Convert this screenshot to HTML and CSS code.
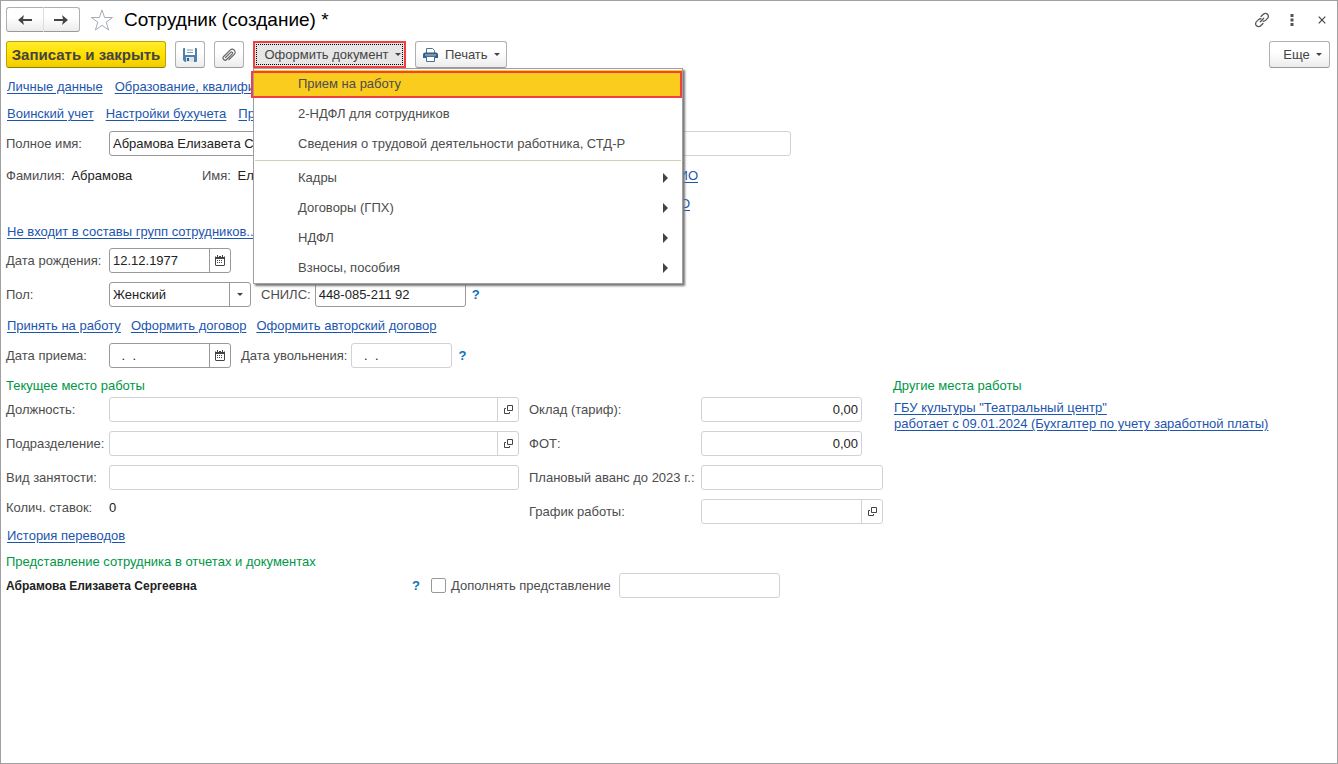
FILE: index.html
```html
<!DOCTYPE html>
<html lang="ru">
<head>
<meta charset="utf-8">
<title>Сотрудник (создание) *</title>
<link rel="stylesheet" href="styles.css">
</head>
<body>
<svg class="sprite" aria-hidden="true">
  <symbol id="calendar" viewBox="0 0 10 11">
    <path fill="#444" fill-rule="evenodd" d="M1 1h8l1 1v8l-1 1H1l-1-1V2zM1 4v6h8V4z"/>
    <path fill="#444" d="M2 0h1v2H2zM7 0h1v2H7zM2 5h1v1H2zM4 5h1v1H4zM6 5h1v1H6zM2 7h1v1H2zM4 7h1v1H4zM6 7h1v1H6z"/>
    <path fill="#fff" d="M1 1h1v1H1zM3 1h1v1H3zM6 1h1v1H6zM8 1h1v1H8z"/>
  </symbol>
  <symbol id="open" viewBox="0 0 9 9">
    <path fill="none" stroke="#444" d="M3.500 .5h5v5h-5zM2 3.500H.5v5h5V7"/>
  </symbol>
</svg>
<div class="window">
  <header class="titlebar">
    <div class="nav-buttons">
      <button class="btn nav-back" aria-label="Назад"><svg width="14" height="10" viewBox="0 0 14 10"><path d="M0 5l6-5-1 4h9v2H5l1 4z" fill="#444"/></svg></button>
      <button class="btn nav-forward" aria-label="Вперед"><svg width="14" height="10" viewBox="0 0 14 10"><path d="M14 5L8 0l1 4H0v2h9l-1 4z" fill="#444"/></svg></button>
    </div>
    <button class="plain star" aria-label="В избранное"><svg width="24" height="22" viewBox="0 0 24 22"><path d="M12 1l2.600 7.500H22.500l-6.300 4.700 2.400 7.800L12 16.300 5.400 21l2.400-7.800L1.500 8.500h7.900z" fill="#fff" stroke="#a3abb8"/></svg></button>
    <h1 class="title">Сотрудник (создание) *</h1>
    <div class="window-tools">
      <button class="plain" aria-label="Ссылка"><svg width="16" height="16" viewBox="0 0 16 16"><g fill="none" stroke="#555" stroke-width="1.300" stroke-linecap="round"><path d="M7 4.500l2.300-2.300a2.900 2.900 0 0 1 4.200 0 2.900 2.900 0 0 1 0 4.200l-2 2a2.900 2.900 0 0 1-2.500.8"/><path d="M9 11.500l-2.300 2.300a2.900 2.900 0 0 1-4.200 0 2.900 2.900 0 0 1 0-4.200l2-2A2.900 2.900 0 0 1 7 6.800"/><path d="M6.300 9.700l3.400-3.400"/></g></svg></button>
      <button class="plain" aria-label="Меню окна"><svg width="4" height="12" viewBox="0 0 4 12"><path fill="#555" d="M.5 0h3v3h-3zM.5 4.500h3v3h-3zM.5 9h3v3h-3z"/></svg></button>
      <button class="plain close" aria-label="Закрыть"><svg width="8" height="8" viewBox="0 0 8 8"><path d="M.7.7l6.600 6.600M7.300.7L.7 7.300" stroke="#444" stroke-width="1.200"/></svg></button>
    </div>
  </header>

  <div class="toolbar">
    <button class="btn primary">Записать и закрыть</button>
    <button class="btn icon-btn" aria-label="Записать"><svg width="14" height="14" viewBox="0 0 14 14"><path d="M0 1q0-1 1-1h12q1 0 1 1v12q0 1-1 1H2l-2-2z" fill="#4f7fab"/><path d="M2 0h10v7H2z" fill="#fff"/><path d="M4 2h6M4 4.500h6" stroke="#7c9ab8"/><path d="M3 9h8v5H3z" fill="#dbe4ec"/><path d="M4 10h2v3H4z" fill="#355f88"/></svg></button>
    <button class="btn icon-btn" aria-label="Присоединенные файлы"><svg width="14" height="14" viewBox="0 0 14 14"><path d="M3.500 9.500l5.200-5.200a1 1 0 0 1 1.600 1.600l-5.600 5.600a2 2 0 0 1-3-3l6.400-6.400a2.900 2.900 0 0 1 4.200 4.200L7 11.500" fill="none" stroke="#666" stroke-width="1.200" stroke-linecap="round"/></svg></button>
    <div class="dropdown">
      <button class="btn menu-btn opened" aria-haspopup="menu" aria-expanded="true">Оформить документ<span class="caret"></span></button>
      <div class="menu" role="menu">
        <button class="menu-item selected" role="menuitem">Прием на работу</button>
        <button class="menu-item" role="menuitem">2-НДФЛ для сотрудников</button>
        <button class="menu-item" role="menuitem">Сведения о трудовой деятельности работника, СТД-Р</button>
        <hr class="menu-line">
        <button class="menu-item sub" role="menuitem">Кадры</button>
        <button class="menu-item sub" role="menuitem">Договоры (ГПХ)</button>
        <button class="menu-item sub" role="menuitem">НДФЛ</button>
        <button class="menu-item sub" role="menuitem">Взносы, пособия</button>
      </div>
    </div>
    <button class="btn menu-btn"><svg class="printer" width="15" height="14" viewBox="0 0 15 14"><path d="M3.500 5V.5h6l2 2V5" fill="#fff" stroke="#4a7196"/><path d="M2 4.500h11q2 0 2 2V10H0V6.500q0-2 2-2z" fill="#355f88"/><path d="M2 7h11" stroke="#b9cbdc"/><path d="M3.500 8.500h8v5h-8z" fill="#fff" stroke="#4a7196"/></svg>Печать<span class="caret"></span></button>
    <button class="btn menu-btn more">Еще<span class="caret"></span></button>
  </div>

  <nav class="links">
    <div class="link-row"><a href="#">Личные данные</a><a href="#">Образование, квалификация</a></div>
    <div class="link-row"><a href="#">Воинский учет</a><a href="#">Настройки бухучета</a><a href="#">Прочее</a></div>
  </nav>

  <form class="form">
    <div class="row">
      <label class="label" for="fullname">Полное имя:</label>
      <input class="box active name" id="fullname" value="Абрамова Елизавета Сергеевна">
      <input class="box name-extra" aria-label="Дополнение к имени" readonly>
    </div>
    <div class="text-rows person-rows">
      <div class="line names">
        <span>Фамилия: <b class="value">Абрамова</b></span>
        <span>Имя: <b class="value">Елизавета</b></span>
        <a href="#">История ФИО</a>
      </div>
      <div class="line declension"><a href="#">Склонение ФИО</a></div>
      <div class="line"><a href="#">Не входит в составы групп сотрудников...</a></div>
    </div>
    <div class="row">
      <label class="label" for="birth">Дата рождения:</label>
      <div class="box active date"><input id="birth" value="12.12.1977"><button type="button" class="side" aria-label="Выбрать дату"><svg width="10" height="11"><use href="#calendar"/></svg></button></div>
    </div>
    <div class="row next">
      <label class="label" for="sex">Пол:</label>
      <div class="box active sex"><select id="sex"><option>Женский</option><option>Мужской</option></select><span class="side"><span class="caret"></span></span></div>
      <label class="after" for="snils">СНИЛС:</label>
      <input class="box active snils" id="snils" value="448-085-211 92">
      <button type="button" class="plain help" aria-label="Справка">?</button>
    </div>
    <div class="text-rows">
      <div class="line link-row actions"><a href="#">Принять на работу</a><a href="#">Оформить договор</a><a href="#">Оформить авторский договор</a></div>
    </div>
    <div class="row">
      <label class="label" for="hired">Дата приема:</label>
      <div class="box active date blank"><input id="hired" value=" .  ."><button type="button" class="side" aria-label="Выбрать дату"><svg width="10" height="11"><use href="#calendar"/></svg></button></div>
      <label class="after" for="fired">Дата увольнения:</label>
      <div class="box fired blank"><input id="fired" value=" .  ." readonly></div>
      <button type="button" class="plain help" aria-label="Справка">?</button>
    </div>

    <div class="columns">
      <section>
        <h2>Текущее место работы</h2>
        <div class="stack">
          <div class="row"><label class="label" for="post">Должность:</label><div class="box grow"><input id="post"><button type="button" class="side" aria-label="Открыть"><svg width="9" height="9"><use href="#open"/></svg></button></div></div>
          <div class="row"><label class="label" for="dept">Подразделение:</label><div class="box grow"><input id="dept"><button type="button" class="side" aria-label="Открыть"><svg width="9" height="9"><use href="#open"/></svg></button></div></div>
          <div class="row"><label class="label" for="kind">Вид занятости:</label><input class="box grow" id="kind"></div>
        </div>
        <div class="line rates"><span class="label">Колич. ставок:</span><b class="value">0</b></div>
        <div class="line"><a href="#">История переводов</a></div>
      </section>
      <section>
        <div class="stack right">
          <div class="row"><label class="label" for="salary">Оклад (тариф):</label><input class="box sum" id="salary" value="0,00"></div>
          <div class="row"><label class="label" for="fot">ФОТ:</label><input class="box sum" id="fot" value="0,00"></div>
          <div class="row"><label class="label" for="advance">Плановый аванс до 2023 г.:</label><input class="box grow" id="advance"></div>
          <div class="row"><label class="label" for="schedule">График работы:</label><div class="box grow"><input id="schedule"><button type="button" class="side" aria-label="Открыть"><svg width="9" height="9"><use href="#open"/></svg></button></div></div>
        </div>
      </section>
      <section>
        <h2>Другие места работы</h2>
        <a class="other" href="#">ГБУ культуры "Театральный центр"<br>работает с 09.01.2024 (Бухгалтер по учету заработной платы)</a>
      </section>
    </div>

    <h2 class="view-title">Представление сотрудника в отчетах и документах</h2>
    <div class="row view">
      <strong class="person">Абрамова Елизавета Сергеевна</strong>
      <button type="button" class="plain help" aria-label="Справка">?</button>
      <label class="check"><input type="checkbox">Дополнять представление</label>
      <input class="box extra" aria-label="Дополнение представления">
    </div>
  </form>
</div>
</body>
</html>
```
FILE: styles.css
```css
* { box-sizing: border-box; }

body {
  margin: 0;
  background: #fff;
  color: #4d4d4d;
  font: 13px/16px "Liberation Sans", Arial, sans-serif;
}

button, input, select { font: inherit; color: inherit; }
button { padding: 0; cursor: pointer; }
svg { display: block; }
.sprite { position: absolute; width: 0; height: 0; }
a { color: #1c55ae; text-underline-offset: 2px; }

.window {
  min-height: 100vh;
  padding: 6px 7px 6px 5px;
  border: 1px solid #a0a0a0;
}

/* Title bar */
.titlebar { display: flex; align-items: center; height: 25px; }
.nav-buttons { display: flex; width: 74px; height: 25px; }
.btn {
  display: flex;
  align-items: center;
  justify-content: center;
  height: 27px;
  border: 1px solid #b0b0b0;
  border-bottom-color: #999;
  border-radius: 3px;
  background: linear-gradient(#fff 40%, #ececec);
  color: #444;
  white-space: nowrap;
}
.nav-back, .nav-forward { flex: 1; height: 25px; }
.nav-back { border-right-color: #ddd; border-radius: 3px 0 0 3px; }
.nav-forward { border-left: 0; border-radius: 0 3px 3px 0; }
.plain { border: 0; background: none; }
.star { margin-left: 10px; }
.title { margin: 0 0 0 10px; color: #000; font-size: 19px; font-weight: 400; line-height: 24px; }
.window-tools { display: flex; align-items: center; gap: 20px; margin-left: auto; padding-right: 4px; }
.close { margin-left: 4px; }

/* Command bar */
.toolbar { display: flex; gap: 9px; margin-top: 9px; }
.primary {
  width: 160px;
  border-color: #bfa300;
  border-bottom-color: #937d00;
  background: linear-gradient(#ffec2e, #ffe000 50%, #f2cc00);
  font-size: 15px;
  font-weight: 700;
}
.icon-btn { width: 30px; }
.menu-btn { padding: 0 6px 0 7px; font-size: 13px; }
.caret {
  margin-left: 6px;
  border: 3px solid transparent;
  border-top-color: #444;
  border-bottom: 0;
}
.printer { margin-right: 7px; }
.more { width: 61px; margin-left: auto; padding-left: 12px; }
.dropdown { position: relative; }
.opened {
  width: 153px;
  padding: 0 4px 0 10px;
  border: 2px solid #f04040;
  border-radius: 0;
  outline: 1px dotted #000;
  outline-offset: -4px;
  background: #e6e6e6;
}
.menu {
  position: absolute;
  z-index: 2;
  top: 27px;
  left: 0;
  width: 430px;
  border: 1px solid #a0a0a0;
  background: #fff;
  box-shadow: 2px 2px 2px #777;
}
.menu-item {
  position: relative;
  display: block;
  width: 100%;
  height: 30px;
  padding-left: 44px;
  border: 0;
  background: none;
  color: #4d4d4d;
  text-align: left;
}
.selected { border: 1px solid #fff; border-width: 1px 0; background: #facc1e; }
.selected::after {
  content: "";
  position: absolute;
  inset: 1px 0 0 -3px;
  border: 2px solid #f04040;
}
.sub::after {
  content: "";
  position: absolute;
  top: 10px;
  right: 14px;
  border: 5px solid transparent;
  border-left-color: #444;
  border-right: 0;
}
.menu-line { height: 1px; margin: 1px 1px 2px; border: 0; background: #cfcfb4; }

/* Section links */
.links { margin-top: 5px; }
.links .link-row { height: 27px; line-height: 27px; }
.link-row { display: flex; gap: 12px; }
.link-row, .line { padding-left: 1px; }
.actions { gap: 10px; }

/* Form */
.form { padding-top: 4px; }
.row { display: flex; align-items: center; height: 25px; }
.next { margin-top: 9px; }
.label { flex: none; width: 103px; }
.line { height: 28px; line-height: 28px; }
.text-rows { padding: 5px 0 3px; }
.person-rows { padding: 6px 0 2px; }
.names { display: flex; width: 692px; padding-left: 0; }
.names span:first-child { width: 196px; }
.names a { margin-left: auto; }
.declension { width: 684px; text-align: right; }
.value { margin-left: 3px; color: #222; font-weight: 400; }
.rates { display: flex; margin-top: 4px; padding-left: 0; }
.rates .value { margin-left: 0; }

.box {
  display: flex;
  min-width: 0;
  height: 25px;
  padding: 0;
  border: 1px solid #d2d2d2;
  border-radius: 3px;
  background: #fff;
  color: #222;
}
input.box, .box input, .box select { padding: 0 3px; outline: 0; }
.box input, .box select { flex: 1; min-width: 0; width: 0; border: 0; background: none; }
.box select { appearance: none; }
.active { border-color: #999; }
.side {
  display: flex;
  flex: none;
  align-items: center;
  justify-content: center;
  width: 21px;
  border: 0;
  border-left: 1px solid #d2d2d2;
  background: none;
}
.active .side { border-color: #999; }
.side .caret { margin: 0; }
.grow { flex: 1; }
.name { flex: 0 1 410px; }
.name-extra { flex: 0 1 262px; margin-left: 10px; }
.date { width: 122px; }
.sex { width: 142px; }
.snils { width: 151px; }
.fired { width: 101px; }
.blank input { padding-left: 8px; white-space: pre; }
.after { margin: 0 4px 0 10px; }
.help { margin-left: 6px; color: #0d72b9; font-weight: 700; }

h2 { margin: 0 0 3px; color: #009646; font-size: 13px; font-weight: 400; line-height: 16px; }
.columns {
  display: grid;
  grid-template-columns: 513px 354px minmax(0, 1fr);
  gap: 10px;
  margin-top: 10px;
}
.stack { display: grid; grid-template-columns: minmax(0, 1fr); gap: 9px; }
.right { padding-top: 19px; }
.right .label { width: 172px; }
.sum { width: 161px; text-align: right; }
.other { display: block; margin: 6px 0 0 1px; }
.view-title { margin-top: 4px; }
.person { width: 400px; color: #222; font-size: 12px; }
.check { display: flex; align-items: center; gap: 5px; margin: 0 8px 0 11px; }
.check input {
  appearance: none;
  width: 15px;
  height: 15px;
  margin: 0;
  border: 1px solid #999;
  border-radius: 2px;
}
.extra { width: 161px; }
```
